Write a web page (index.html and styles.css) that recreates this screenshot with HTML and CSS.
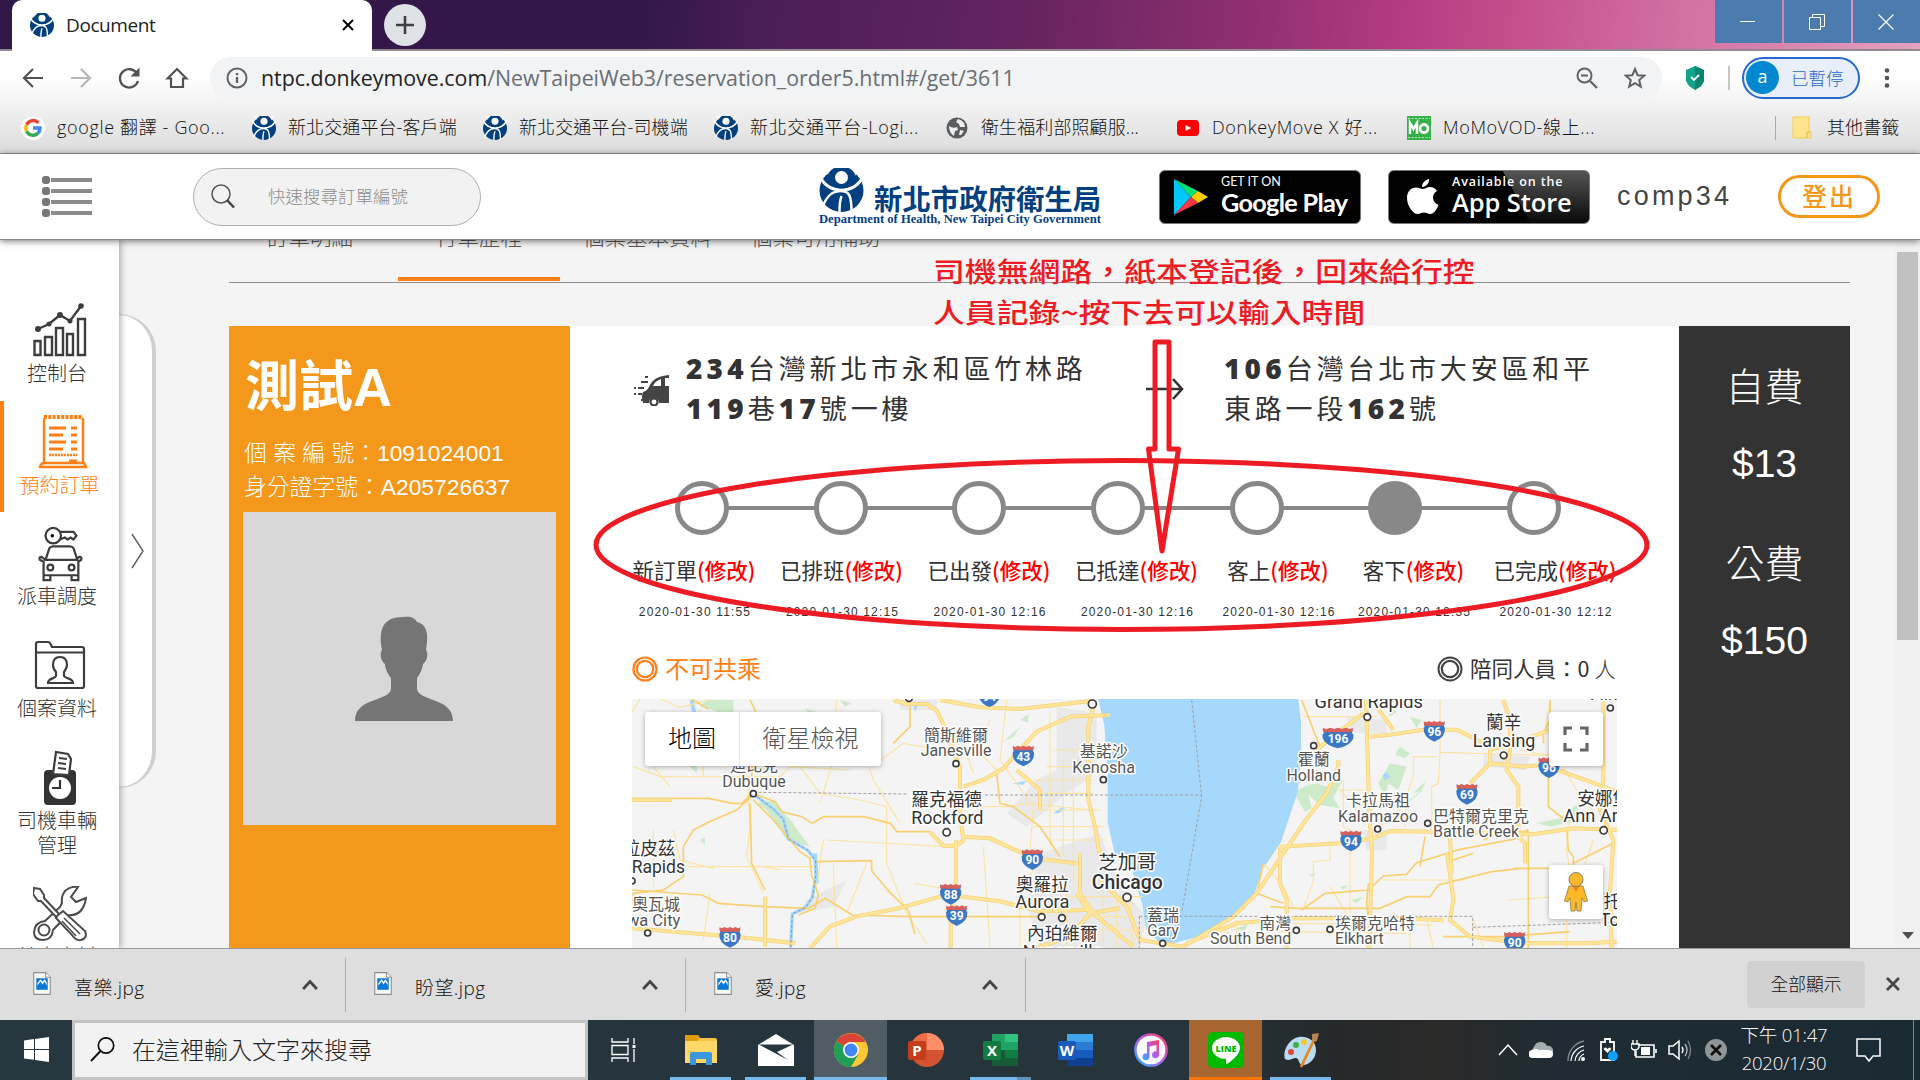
FILE: index.html
```html
<!DOCTYPE html>
<html lang="zh-Hant">
<head>
<meta charset="utf-8">
<title>Document</title>
<link rel="stylesheet" href="styles.css">
</head>
<body>
<svg class="defs" width="0" height="0">
  <symbol id="emblem" viewBox="0 0 44 44">
    <ellipse cx="22" cy="22.5" rx="22" ry="21.5" fill="#04407f"/>
    <path d="M0 8 C5 18 13 22 22 22 S39 18 44 8" fill="none" stroke="#fff" stroke-width="3"/>
    <path d="M3 0 L8 5 Q11 16 21 17 H23 Q33 16 37 5 L41 0 H0" fill="#fff"/>
    <ellipse cx="22" cy="9.5" rx="14" ry="11" fill="#04407f"/>
    <path d="M7 8 Q12 19 22 19 T37 8" fill="none" stroke="#04407f" stroke-width="2"/>
    <ellipse cx="22" cy="9.5" rx="6.5" ry="6.5" fill="#fff"/>
    <path d="M3 39 C8 26 14 23 21 23 C29 23 32 26 32 44" fill="none" stroke="#fff" stroke-width="2.500"/>
    <path d="M20 44 Q20 33 22 28" fill="none" stroke="#fff" stroke-width="2.500"/>
  </symbol>
  <symbol id="jpg" viewBox="0 0 17 22">
    <path d="M.6.6H12l4.400 4.400V21.400H.6z" fill="#fafafa" stroke="#8b8b8b"/>
    <path d="M12 .6V5h4.400" fill="#fff" stroke="#8b8b8b"/>
    <path d="M3 6h11v11H3z" fill="#0a78d6"/>
    <path d="M4 13l3-4 2 3 2-3 2 4v-3l-2-3-2 2-2-2-3 4z" fill="#fff"/>
  </symbol>
  <symbol id="up" viewBox="0 0 14 10"><path d="M1 8.500 7 2l6 6.500" fill="none" stroke="#444" stroke-width="2.400"/></symbol>
</svg>

<div class="tabstrip">
  <div class="tab">
    <svg class="fav"><use href="#emblem"/></svg>
    <span class="tab-title">Document</span>
    <svg class="tab-close" viewBox="0 0 12 12"><path d="M1 1l10 10M11 1 1 11" stroke="#000" stroke-width="2"/></svg>
  </div>
  <div class="newtab"><svg width="20" height="20" viewBox="0 0 20 20"><path d="M10 1v18M1 10h18" stroke="#3c4043" stroke-width="2.600"/></svg></div>
  <div class="winbtns">
    <div><svg width="16" height="16" viewBox="0 0 16 16"><path d="M0 7.500h15" stroke="#fff"/></svg></div>
    <div><svg width="16" height="16" viewBox="0 0 16 16"><path d="M.5 3.500h11v12H.5zM3.500 3V.5h12v12H12" fill="none" stroke="#fff"/></svg></div>
    <div><svg width="16" height="16" viewBox="0 0 16 16"><path d="M.5.5l15 15M15.500.5l-15 15" stroke="#fff" stroke-width="1.200"/></svg></div>
  </div>
</div>

<div class="chrome">
  <div class="toolbar">
    <div class="navs">
      <svg viewBox="0 0 24 24"><path d="M22 12H3M12 3l-9 9 9 9" fill="none" stroke="#505356" stroke-width="2.200"/></svg>
      <svg viewBox="0 0 24 24"><path d="M2 12h19M12 3l9 9-9 9" fill="none" stroke="#b5b7ba" stroke-width="2.200"/></svg>
      <svg viewBox="0 0 24 24"><path d="M20 7.500A9.200 9.200 0 1 0 21 15" fill="none" stroke="#505356" stroke-width="2.400"/><path d="M22.500 1.500v9h-9z" fill="#505356"/></svg>
      <svg viewBox="0 0 24 24"><path d="M2.500 12.500 12 3l9.500 9.500H18V21H6v-8.500z" fill="none" stroke="#505356" stroke-width="2.200"/></svg>
    </div>
    <div class="omnibox">
      <svg width="22" height="22" viewBox="0 0 22 22"><circle cx="11" cy="11" r="9.500" fill="none" stroke="#5f6368" stroke-width="2"/><path d="M11 10v6M11 6v2.200" stroke="#5f6368" stroke-width="2.300"/></svg>
      <span class="url"><b>ntpc.donkeymove.com</b>/NewTaipeiWeb3/reservation_order5.html#/get/3611</span>
      <svg class="mag" width="22" height="22" viewBox="0 0 22 22"><circle cx="8.500" cy="8.500" r="7" fill="none" stroke="#5f6368" stroke-width="2"/><path d="M5 8.500h7M14 14l7 7" stroke="#5f6368" stroke-width="2.200"/></svg>
      <svg width="22" height="22" viewBox="0 0 22 22"><path d="M11 2l2.600 6.200 6.700.5-5.100 4.400 1.600 6.600L11 16.200 5.200 19.700l1.600-6.600-5.100-4.400 6.700-.5z" fill="none" stroke="#5f6368" stroke-width="2"/></svg>
    </div>
    <svg class="shield" width="20" height="24" viewBox="0 0 20 24"><path d="M10 0l9 4v11l-3 5-6 4-6-4-3-5V4z" fill="#12a389"/><path d="M10 0l9 4v11l-3 5-6 4z" fill="#0c8570"/><path d="M6 11l3 3 5-5" fill="none" stroke="#fff" stroke-width="1.800"/></svg>
    <i class="vbar"></i>
    <div class="profile"><span class="avatar">a</span><span>已暫停</span></div>
    <svg class="dots" width="6" height="20" viewBox="0 0 6 20"><g fill="#505356"><circle cx="3" cy="2.500" r="2.300"/><circle cx="3" cy="10" r="2.300"/><circle cx="3" cy="17.500" r="2.300"/></g></svg>
  </div>
  <div class="bookmarks">
    <div class="bm"><svg viewBox="0 0 24 24"><circle cx="12" cy="12" r="12" fill="#fff"/><g fill="none" stroke-width="3.400"><path d="M17.500 6.800A7.200 7.200 0 0 0 5.600 8.800" stroke="#ea4335"/><path d="M5.600 8.800a7.200 7.200 0 0 0 0 6.400" stroke="#fbbc05"/><path d="M5.600 15.200A7.200 7.200 0 0 0 16.800 17.400" stroke="#34a853"/><path d="M16.800 17.400Q19 15.500 19 12H12" stroke="#4285f4"/></g></svg><span class="wide">google 翻譯 - Goo...</span></div>
    <div class="bm"><svg><use href="#emblem"/></svg><span>新北交通平台-客戶端</span></div>
    <div class="bm"><svg><use href="#emblem"/></svg><span>新北交通平台-司機端</span></div>
    <div class="bm"><svg><use href="#emblem"/></svg><span class="wide">新北交通平台-Logi...</span></div>
    <div class="bm"><svg viewBox="0 0 24 24"><circle cx="12" cy="12" r="10.500" fill="#5a5d60"/><path d="M4 10q4 3 8 1l1 3-3 1-1 5q-5-3-5-10zM13 3l-2 3 3 2 1 3h5q0-6-7-8zM15 14l4 1-3 4h-2z" fill="#eee"/></svg><span>衛生福利部照顧服...</span></div>
    <div class="bm"><svg viewBox="0 0 24 24"><rect x="1" y="4" width="22" height="16" rx="4" fill="#f00"/><path d="M9.500 9l6 3-6 3z" fill="#fff"/></svg><span class="wide">DonkeyMove X 好...</span></div>
    <div class="bm"><svg viewBox="0 0 24 24"><path d="M0 0h24v24H0z" fill="#35b14a"/><path d="M1 2.500h22M1 21.500h22" stroke="#b9eabf" stroke-dasharray="2 1.500"/><path d="M3 18V7l3.500 6L10 7v11" fill="none" stroke="#fff" stroke-width="2.500"/><circle cx="17" cy="12.500" r="4" fill="none" stroke="#fff" stroke-width="2.800"/></svg><span class="wide">MoMoVOD-線上...</span></div>
    <i class="vbar"></i>
    <div class="bm other"><svg viewBox="0 0 24 24"><path d="M3 1h16v15h2v6H3z" fill="#fde48d" stroke="#f3cd55"/><path d="M17 22v-6h4" fill="none" stroke="#e5b93c"/></svg><span>其他書籤</span></div>
  </div>
</div>

<header class="apphead">
  <svg class="menu" width="51" height="42" viewBox="0 0 51 42"><g fill="#777"><rect x="0" y="0" width="8" height="8" rx="3"/><rect x="0" y="11" width="8" height="8" rx="3"/><rect x="0" y="22" width="8" height="8" rx="3"/><rect x="0" y="33" width="8" height="8" rx="3"/></g><path d="M9 4h41M9 15h41M9 26h41M9 37h41" stroke="#8b8b8b" stroke-width="4"/></svg>
  <div class="search"><svg width="24" height="24" viewBox="0 0 24 24"><circle cx="10" cy="10" r="9" fill="none" stroke="#555" stroke-width="1.500"/><path d="M16 16l7 7.500" stroke="#444" stroke-width="2.500"/></svg><span>快速搜尋訂單編號</span></div>
  <div class="logo">
    <div class="logo-row"><svg><use href="#emblem"/></svg><b>新北市政府衛生局</b></div>
    <small>Department of Health, New Taipei City Government</small>
  </div>
  <div class="badge gp">
    <svg width="36" height="36" viewBox="0 0 36 36"><path d="M1 0v36L18 18z" fill="#00c8fb"/><path d="M1 0l24 12-7 6z" fill="#00e178"/><path d="M25 12l10 6-10 6-7-6z" fill="#ffcb05"/><path d="M1 36l24-12-7-6z" fill="#f93647"/></svg>
    <div><small>GET IT ON</small><strong>Google Play</strong></div>
  </div>
  <div class="badge as">
    <svg width="32" height="36" viewBox="0 0 32 36"><path d="M22 0c.5 4-3 8-7 8 0-4 3-7 7-8zM16 10c2 0 4-2 7-2 3 0 5.500 1.500 7 4-6 3.500-5 11.500 1.500 14-2 5-5 9-8 9-2.500 0-4-1.500-6.500-1.500S12.500 35 10.500 35C6 35 0 27 0 19 0 12 4.500 8.500 9 8.500c3 0 5 1.500 7 1.500z" fill="#fff"/></svg>
    <div><small>Available on the</small><strong>App Store</strong></div>
  </div>
  <span class="user">comp34</span>
  <div class="logout">登出</div>
</header>

<div class="main">
  <nav class="side">
    <div class="item"><svg width="54" height="56" viewBox="0 0 54 56"><g fill="none" stroke="#3d3d3d" stroke-width="2.400"><path d="M1.500 38h6v14h-6zM12 34h7v18h-7zM23 25h7v27h-7zM34 31h6v21h-6zM45 16h7v36h-7z"/><path d="M5 26l11-5 11-9 10 6L48 3"/></g><g fill="#3d3d3d"><circle cx="5" cy="26" r="3"/><circle cx="16" cy="21" r="2.500"/><circle cx="27" cy="12" r="3"/><circle cx="37" cy="18" r="2.500"/><circle cx="48" cy="3" r="2.800"/></g></svg><span>控制台</span></div>
    <div class="item on"><svg width="54" height="56" viewBox="0 0 54 56"><g fill="none" stroke="#ff7f17" stroke-width="2.400"><path d="M8 3v44M47 3v44M4 52h46q-1-4-3-4H8q-3 0-4 4z"/><path d="M8 2h39" stroke-width="4" stroke-dasharray="3 1.300"/><path d="M13 13h17M35 13h6M13 20h14M35 20h6M13 27h17M35 27h6M13 34h14M35 34h6M33 46h8" stroke-width="2.800"/><path d="M13 40h28" stroke-dasharray="2 1"/></g></svg><span>預約訂單</span></div>
    <div class="item"><svg width="54" height="56" viewBox="0 0 54 58"><g fill="none" stroke="#3d3d3d" stroke-width="2.300"><circle cx="20" cy="10" r="8"/><path d="M27 6h14l3 4-3 4-3-2-3 2-3-2-5 2"/><path d="M12 35l4-12q1-2 4-2h17q3 0 4 2l4 12zM12 35l-4-3q-3 0-2 3l4 2v14h36V37l3-2q1-3-2-3l-4 3M10 51v5h7v-5M39 51v5h7v-5"/><circle cx="17" cy="43" r="3"/><circle cx="39" cy="43" r="3"/></g><circle cx="19" cy="10" r="1.800"/></svg><span>派車調度</span></div>
    <div class="item"><svg width="54" height="56" viewBox="0 -2 54 56"><g fill="none" stroke="#3d3d3d" stroke-width="2.200"><path d="M3 46V4q0-2 2-2h10q2 0 3 3l1 2h30q2 0 2 2v37q0 2-2 2H5q-2 0-2-2zM3 12.500h48"/><path d="M27 17c5 0 7 3 7 8 0 3-2 5-3 7v4c2 3 9 2 9 7H15c0-5 7-4 8-7v-4c-2-2-3-4-3-7 0-5 2-8 7-8z"/></g></svg><span>個案資料</span></div>
    <div class="item two"><svg width="54" height="56" viewBox="0 0 54 56"><rect x="11" y="20" width="32" height="35" rx="4" fill="#333"/><path d="M20 24 23 2l12 2 3 5-2 16z" fill="#fff" stroke="#3d3d3d" stroke-width="2.200"/><path d="M26 8l8 1M25 13l8 1M25 18l8 1" stroke="#3d3d3d" stroke-width="2"/><circle cx="27" cy="38" r="11" fill="#fff"/><path d="M27 30v8h-8" fill="none" stroke="#333" stroke-width="2.200"/></svg><span>司機車輛<br>管理</span></div>
    <div class="item"><svg width="54" height="56" viewBox="0 0 54 56"><g fill="#fff" stroke="#4b4b4b" stroke-width="2"><path d="M45 1q-8-1-13 4-4 5-3 12l-2 4-15 14q-10 1-11 11 0 8 9 8 9 0 10-10l14-15q16 2 19-17l-10 4-5-5z"/><circle cx="11" cy="44" r="5.500"/><path d="M1 2l6 1 4 6v3l16 17-3 3L8 15H5L0 8z"/><path d="M24 30l6-5 22 20q3 7-4 9-5 1-9-5L23 32z"/><path d="M31 32l16 16M29 35l14 15" stroke-width="1.500"/></g></svg><span>基本資料</span></div>
  </nav>
  <div class="handle"><svg width="14" height="36" viewBox="0 0 14 36"><path d="M1 1l11 17L1 35" fill="none" stroke="#666" stroke-width="1.500"/></svg></div>

  <section class="page">
    <div class="tabs"><span>訂單明細</span><span class="cur">行車歷程</span><span>個案基本資料</span><span>個案可用補助</span></div>
    <div class="cards">
      <aside class="person">
        <h1>測試A</h1>
        <p class="sp"><span>個 案 編 號：</span>1091024001</p>
        <p><span>身分證字號：</span>A205726637</p>
        <div class="photo"><svg width="98" height="106" viewBox="0 0 98 106"><path d="M48 1c8-1 12 1 14 5 10 2 12 13 9 28 2 2 2 11-3 14-1 6-3 10-6 14v11c2 13 36 8 36 32H0C0 81 34 86 36 73V62c-3-4-6-9-6-14-5-3-5-12-3-14C23 12 29 1 48 1z" fill="#757575"/></svg></div>
      </aside>
      <div class="trip">
        <div class="route">
          <svg class="van" width="36" height="32" viewBox="0 0 36 32"><path d="M10 18q4-1 6-5Q20 2 36 1v3h-4v8h4v17H26a5 5 0 0 0-10 0h-6q-2-6 0-11zM28 5q-6 2-8 7h8z" fill="#444" fill-rule="evenodd"/><circle cx="21" cy="28" r="3.500" fill="#fff" stroke="#444" stroke-width="2.200"/><path d="M12 3h3M8 8h7M1 14h2M5 14h6M1 20h2M5 20h4M8 26h3" stroke="#444" stroke-width="2"/></svg>
          <div class="addr from"><b>234</b>台灣新北市永和區竹林路<br><b>119</b>巷<b>17</b>號一樓</div>
          <svg class="to" width="38" height="22" viewBox="0 0 38 22"><path d="M0 11h36M27 1l9 10-9 10" fill="none" stroke="#333" stroke-width="2.600"/></svg>
          <div class="addr"><b>106</b>台灣台北市大安區和平<br>東路一段<b>162</b>號</div>
        </div>
        <div class="steps"><i></i><i></i><i></i><i></i><i></i><i class="full"></i><i></i></div>
        <div class="stages">
          <div>新訂單<em>(修改)</em><small>2020-01-30 11:55</small></div>
          <div>已排班<em>(修改)</em><small>2020-01-30 12:15</small></div>
          <div>已出發<em>(修改)</em><small>2020-01-30 12:16</small></div>
          <div>已抵達<em>(修改)</em><small>2020-01-30 12:16</small></div>
          <div class="nar">客上<em>(修改)</em><small>2020-01-30 12:16</small></div>
          <div class="nar">客下<em>(修改)</em><small>2020-01-30 12:35</small></div>
          <div>已完成<em>(修改)</em><small>2020-01-30 12:12</small></div>
        </div>
        <div class="share">
          <svg width="26" height="26" viewBox="0 0 26 26"><g fill="none" stroke="#ff7f17"><circle cx="13" cy="13" r="11.500" stroke-width="2.200"/><circle cx="13" cy="13" r="8.200" stroke-width="2.200"/></g></svg>
          <b>不可共乘</b>
          <svg width="26" height="26" viewBox="0 0 26 26"><g fill="none" stroke="#444"><circle cx="13" cy="13" r="11.500" stroke-width="2"/><circle cx="13" cy="13" r="8.200" stroke-width="2.200"/></g></svg>
          <span>陪同人員：0 <u>人</u></span>
        </div>
        <div class="map">
          <svg width="985" height="249" viewBox="36 177 2955 747">
            <defs>
              <g id="shield"><path d="M-32-22Q-26-14-32-8-34 20 0 33 34 20 32-8 26-14 32-22Z" fill="#3a78c6"/><path d="M-32-28l8 3 8-4 8 4 8-4 8 4 8-4 8 4 8-3-4 13h-58z" fill="#d7605c"/></g>
              <g id="major">
                <path d="M820 180l40 12h60l30 20 30 60 20 60 20 50v120l5 60 5 40-20 15h-40l-40-40M1030 590l80 5 130 60 130 15M1008 600v120l-16 100v104M1030 440l60-20 60-35 40-45 60-65 100-45 120-5M960 180l120 22 120 5 220-25M1420 200l-15 60v220l20 80 15 90M36 865l180 15 130 10 180 20M570 924l60-65 80-30 130-25 140-40 160 20 120 30 160-5M1190 390l70 60v60M36 480h120M435 770v150M1380 640v120l40 60 120 100"/>
                <path d="M1370 760l40 60-60 70-100 34M1410 820l90-15M1440 720l80 80 40 100 130 20 150-90 70-70 80-120 60-90 70-90 35-80V360M1980 620l180-10 100-15 50-22 130 2 300 8 120-18 150 5 40 25M2238 180l10 340 8 120-8 284M2250 290l60-6 100-15h100l80 40M2270 200l50 70M2090 330l60-50 80-60M2550 430l60-60V330M2610 370l100 10 60-5 140 50 80 30M2650 180l20 60v90l-10 60 35 50v150l20 20v60M2480 640l10 60 10 80-10 60 60 50 80 10 90 10 180 0 90-5M2490 580l5 120M1980 620v110l20 50v144M2790 270l-80 30-100 30M2950 180v240l-10 90 40 90-10 160 5 164M1700 910l150-60 160-15 340 0 120 6"/>
              </g>
            </defs>
            <rect x="36" y="177" width="2955" height="747" fill="#f4f4f4"/>
            <g fill="#e9e9e9"><path d="M1310 200l120 20v180l-90 60-120 100-60-40 90-100 60-30zM1260 640l180-60 60 160 80 90-20 94h-300l-40-130zM560 780l120-60-40 80-100 20zM840 180h110v30H840zM2180 230l120 10v40h-110zM2590 340l140 10-10 40-130-10zM2230 570h70v60h-60z"/></g>
            <g fill="#cdebcb"><path d="M260 180h80v60l-60-30-40-10zM210 380l20-10v30zM555 205l45 15-30 10zM660 180l35 10-20 10zM1150 305l50-45-20 30zM1200 240l25-18v25zM410 490l50-10 50 60 60 80-70-20-60-90zM240 600l15-10v25zM2090 430l30 10 50-25-30 60 20 30-60-10-35-30 10 40-20 10-35-60 45-20zM2310 370l50 10-25 70-30-20-10 40-20-40zM2340 320l30 20-15 15-30-10zM2350 500l60-50-30 10 40-40-15 30-50 40zM2370 230l35 10-15 25zM2300 195l30 20-20 15zM2290 170l40 10-15 15zM2750 550l70-15 60-50-20 60-70 15zM2195 780l35-10-20 20zM2160 740l25-5-15 15zM1840 870l45-20-10 20zM2065 705l22-5-10 10zM490 560l30-20-20 50z"/></g>
            <g fill="#a6d8fc"><path d="M1435 177H2035l8 70 0 100-10 110-50 150-55 80-30 90-60 50-90 60-120 30-20-20-30-30-10-70-30-100-55-60-20-90v-140l-10-150z"/><path d="M1175 432l45-10-10 12zM1300 520l30-22 5 10-20 12zM880 190l15 5-10 20zM2288 405l12-8 10 14-15 10z"/></g>
            <path d="M400 462l60 45 30 30 15 60 60 35 22 30v50l-10 60-20 30-40 20-5 100" fill="none" stroke="#a6d8fc" stroke-width="10"/>
            <path d="M215 180l8 40M585 640l6 90" stroke="#a6d8fc" stroke-width="12"/>
            <g fill="none" stroke="#fbe3a3" stroke-width="3.500">
              <path d="M60 177l-24 40M120 177l60 25 90-22M100 210v170l50 60M240 210l10 200M380 380l10 180-10 90 50 110M540 380l60 80 120 20 80 20v80M650 180l-10 180-40 130M700 240l60 180 80 130M770 370l80-60 110 20M610 600l-20 140M640 670l10 254M800 550v120l60 150 60 90M36 680h550M620 600l360 20M160 570l20 90 100 25M100 570v170M270 760l-20 140M480 690l-50-10M1040 500h120l60-10 200 20M1060 400l-40-120M1110 240l-40 90 60 60M1160 180l-20 180 100 140-10 130M1290 220v400M1330 360v290M1360 330v400M1240 420h180M1260 460h160M1260 510h180M1240 560h210M1290 600h170M1300 330h120M1280 380h130M1250 680l-50 60v180M1340 740v184M1390 830h130M1350 770h220M1370 870h200M1450 740v170M1490 760v160M1090 620l20 300M880 730l120 20M740 670l-60 150M40 380l80 30 130 0M240 410h240l30-30 180 10"/>
              <path d="M2050 230h220M2460 177v160l500 14M2460 340l-5 90-20 10v150M2380 350h70M2380 350v60l-25 70v80M2090 390l80 70 60 70M2160 450h80M2170 420v140l20 10v250M2130 610v50l-50 5v60l-30 80M1930 670l60 70 30 60M2700 330l110 20 60 100 60 80M2350 480l-30 60-50 20M2790 180l-15 100M2850 530l-10 100 20 140M1990 850l450 5M1980 875l380 5M2240 924l20-90M2370 840v84M2420 840l20 84M2560 840l30 80M2840 820v104M2130 740l110 180M2290 720h250M2660 780l300-20M1800 860l80 60M1850 840v84M1530 780l10 140M2920 600l-70 200"/>
            </g>
            <g fill="none" stroke="#f8d070" stroke-width="5">
              <path d="M36 475h230l70 15h30l30-30 70 25 20 30 60 15 30 20 35-20h120l80 20 20 25h100M400 465l-50 45-70 30-60 30-30 50v90l-60 40-90 10v30M400 480l60 60 80 95 30 20 5 50 20 60-10 40-50 20M36 750l210 15 50 25 140 10 130 5 50-30 80 50 180 5h400M590 665l165-3 0 30 50 60 60 60 20 70M390 180l15 30-10 200M215 177l50 30M870 200v60l-50 50M390 490l5 180 40 80M1130 400l10 90 40 10 80 60 60 90"/>
              <path d="M2045 180l35 90 20 50M1950 800l80 5h250l80-35h70l25-35 160-40 90-10M2045 810l70-50 130-10 45-42 70-5 30-35 130-40 160-30 45-30M2415 590l-15 90M2245 730l-5 60 5 40M2500 660l60-20M2625 575l100 0v349M2590 600l40-20M2840 570l5 60 15 20v40M2860 670l120-60M2680 685h140l90 80h80M2785 410v90l50 40M2790 180v60l-20 40v30M2470 890h180l200-15M1930 670l-20 90 80 30"/>
            </g>
            <use href="#major" fill="none" stroke="#f7d173" stroke-width="12"/>
            <use href="#major" fill="none" stroke="#ffe59a" stroke-width="8"/>
            <g fill="none" stroke="#a0a0a0" stroke-width="3" stroke-dasharray="9 6"><path d="M415 457l450 5M1095 465h650M1715 180l30 290-60 350M1558 829h1000v95M2558 862l430-15M1558 829v95"/></g>
            <path d="M400 462l60 45 30 30 15 60 60 35 22 30v50l-10 60-20 30-40 20-5 100" fill="none" stroke="#7f9aae" stroke-width="3" stroke-dasharray="9 6"/>
            <g fill="#fff" stroke="#3a3a3a" stroke-width="5"><circle cx="400" cy="461" r="9"/><circle cx="1008" cy="371" r="9"/><circle cx="980" cy="577" r="11"/><circle cx="83" cy="879" r="9"/><circle cx="1265" cy="831" r="10"/><circle cx="1326" cy="834" r="10"/><circle cx="1417" cy="192" r="12"/><circle cx="867" cy="174" r="10"/><circle cx="1450" cy="419" r="9"/><circle cx="36" cy="723" r="9"/><circle cx="1521" cy="772" r="12"/><circle cx="1628" cy="910" r="9"/><circle cx="2242" cy="231" r="10"/><circle cx="2081" cy="317" r="9"/><circle cx="2651" cy="346" r="10"/><circle cx="2273" cy="567" r="9"/><circle cx="2423" cy="550" r="9"/><circle cx="2951" cy="571" r="11"/><circle cx="2971" cy="204" r="9"/><circle cx="2029" cy="871" r="9"/><circle cx="2130" cy="868" r="9"/></g>
            <g class="sh">
              <g transform="translate(1108 168)"><use href="#shield"/><text y="16">94</text></g>
              <g transform="translate(1210 346)"><use href="#shield"/><text y="16">43</text></g>
              <g transform="translate(1237 657)"><use href="#shield"/><text y="16">90</text></g>
              <g transform="translate(992 761)"><use href="#shield"/><text y="16">88</text></g>
              <g transform="translate(1010 825)"><use href="#shield"/><text y="16">39</text></g>
              <g transform="translate(330 890)"><use href="#shield"/><text y="16">80</text></g>
              <g transform="translate(2154 292)"><use href="#shield" transform="scale(1.450 1)"/><text y="16">196</text></g>
              <g transform="translate(2443 272)"><use href="#shield"/><text y="16">96</text></g>
              <g transform="translate(2787 381)"><use href="#shield"/><text y="16">96</text></g>
              <g transform="translate(2541 461)"><use href="#shield"/><text y="16">69</text></g>
              <g transform="translate(2193 601)"><use href="#shield"/><text y="16">94</text></g>
              <g transform="translate(2684 905)"><use href="#shield"/><text y="16">90</text></g>
            </g>
            <g class="city">
              <text x="402" y="392">迪比克</text><text x="402" y="440" textLength="190" lengthAdjust="spacingAndGlyphs">Dubuque</text>
              <text x="1008" y="302">簡斯維爾</text><text x="1008" y="348" textLength="212" lengthAdjust="spacingAndGlyphs">Janesville</text>
              <text x="1451" y="350">基諾沙</text><text x="1451" y="398" textLength="188" lengthAdjust="spacingAndGlyphs">Kenosha</text>
              <text x="108" y="810">奧瓦城</text><text x="80" y="858" textLength="202" lengthAdjust="spacingAndGlyphs">Iowa City</text>
              <text x="1629" y="842">蓋瑞</text><text x="1629" y="889" textLength="94" lengthAdjust="spacingAndGlyphs">Gary</text>
              <text x="2081" y="375">霍蘭</text><text x="2081" y="422" textLength="163" lengthAdjust="spacingAndGlyphs">Holland</text>
              <text x="2274" y="498">卡拉馬祖</text><text x="2274" y="545" textLength="240" lengthAdjust="spacingAndGlyphs">Kalamazoo</text>
              <text x="2583" y="545">巴特爾克里克</text><text x="2568" y="592" textLength="258" lengthAdjust="spacingAndGlyphs">Battle Creek</text>
              <text x="1966" y="866">南灣</text><text x="1892" y="911" textLength="244" lengthAdjust="spacingAndGlyphs">South Bend</text>
              <text x="2265" y="866">埃爾克哈特</text><text x="2218" y="911" textLength="146" lengthAdjust="spacingAndGlyphs">Elkhart</text>
            </g>
            <g class="city big">
              <text x="980" y="497">羅克福德</text><text x="982" y="551" textLength="217" lengthAdjust="spacingAndGlyphs">Rockford</text>
              <text x="87" y="644">拉皮茲</text><text x="115" y="699" textLength="160" lengthAdjust="spacingAndGlyphs">Rapids</text>
              <text x="1267" y="752">奧羅拉</text><text x="1267" y="805" textLength="162" lengthAdjust="spacingAndGlyphs">Aurora</text>
              <text x="1327" y="900">內珀維爾</text><text x="1327" y="955" textLength="238" lengthAdjust="spacingAndGlyphs">Naperville</text>
              <text x="1522" y="686" class="xl">芝加哥</text><text x="1522" y="746" class="xb" textLength="213" lengthAdjust="spacingAndGlyphs">Chicago</text>
              <text x="2246" y="205" textLength="325" lengthAdjust="spacingAndGlyphs">Grand Rapids</text>
              <text x="2651" y="266">蘭辛</text><text x="2652" y="321" textLength="188" lengthAdjust="spacingAndGlyphs">Lansing</text>
              <text x="2951" y="495">安娜堡</text><text x="2952" y="546" textLength="244" lengthAdjust="spacingAndGlyphs">Ann Arbor</text>
              <text x="3030" y="805">托萊多</text><text x="3020" y="858">Toledo</text>
              <text x="2960" y="180">Flint</text>
            </g>
          </svg>
          <div class="maptype"><span>地圖</span><span>衛星檢視</span></div>
          <div class="mapbtn full-btn"><svg width="26" height="26" viewBox="0 0 26 26"><path d="M2 9V2h7M17 2h7v7M24 17v7h-7M9 24H2v-7" fill="none" stroke="#666" stroke-width="3.200"/></svg></div>
          <div class="mapbtn peg"><svg width="24" height="40" viewBox="0 0 24 40"><path d="M5 14h14l4.500 15-3.500 1-2-4-1 13h-4l-1-9-1 9H7L6 26l-2 4-3.500-1z" fill="#fbb829" stroke="#8c7a4a" stroke-width=".8"/><path d="M8 14h8l-4 6z" fill="#e8871e"/><circle cx="12" cy="7.500" r="7" fill="#fbb829" stroke="#666" stroke-width=".8"/></svg></div>
        </div>
      </div>
      <aside class="fees"><span>自費</span><span>$13</span><span class="gap">公費</span><span>$150</span></aside>
    </div>
  </section>
  <div class="scroll"><i></i><svg width="12" height="7" viewBox="0 0 12 7"><path d="M0 0h12L6 7z" fill="#505050"/></svg></div>
</div>

<div class="downloads">
  <div class="dl"><svg width="18" height="23"><use href="#jpg"/></svg><span>喜樂.jpg</span><svg width="16" height="12"><use href="#up"/></svg></div>
  <div class="dl"><svg width="18" height="23"><use href="#jpg"/></svg><span>盼望.jpg</span><svg width="16" height="12"><use href="#up"/></svg></div>
  <div class="dl"><svg width="18" height="23"><use href="#jpg"/></svg><span>愛.jpg</span><svg width="16" height="12"><use href="#up"/></svg></div>
  <div class="showall">全部顯示</div>
  <svg class="dlx" width="14" height="14" viewBox="0 0 14 14"><path d="M1 1l12 12M13 1 1 13" stroke="#444" stroke-width="2.800"/></svg>
</div>

<div class="taskbar">
  <div class="start"><svg width="25" height="25" viewBox="0 0 25 25"><path d="M0 3.500l10-1.400V12H0zM11 2l14-2v12H11zM0 13h10v9.800L0 21.400zM11 13h14v12l-14-2z" fill="#fff"/></svg></div>
  <div class="find"><svg width="25" height="25" viewBox="0 0 25 25"><circle cx="16" cy="8.500" r="7.700" fill="none" stroke="#111" stroke-width="1.700"/><path d="M10.500 14 1 24" stroke="#111" stroke-width="1.900"/></svg><span>在這裡輸入文字來搜尋</span></div>
  <div class="tv"><svg width="26" height="24" viewBox="0 0 26 24"><g fill="none" stroke="#fff" stroke-width="1.300"><path d="M1 0v4h16V0M1 7.500h16v9H1zM1 24v-4h16v4M23 0v6M23 11v13"/></g><path d="M21.500 7h3v3h-3z" fill="#fff"/></svg></div>
  <div class="app run"><svg viewBox="0 0 36 36"><path d="M2 5q0-2 2-2h11l2 3h15q2 0 2 2v22H2z" fill="#f7c644"/><path d="M2 3h13l2 3-3 3H2z" fill="#df9c08"/><path d="M2 9h32v22H2z" fill="#fdd869"/><path d="M7 33V22q0-2 2-2h18q2 0 2 2v11h-6v-6H13v6z" fill="#3a96dd"/></svg></div>
  <div class="app run"><svg viewBox="0 0 36 36"><path d="M0 13 18 2l18 11v21H0z" fill="#fff"/><path d="M1 12.500h34L19 20l11 8-17-9z" fill="#26363f"/></svg></div>
  <div class="app run hot"><svg viewBox="0 0 36 36"><circle cx="18" cy="18" r="17" fill="#fcc934"/><path d="M18 18 3.300 9.500A17 17 0 0 1 32.700 10H18z" fill="#da4437"/><path d="M18 18 3.300 9.500A17 17 0 0 0 18 35l7.500-13z" fill="#1e9e57"/><circle cx="18" cy="18" r="8" fill="#fff"/><circle cx="18" cy="18" r="6.400" fill="#4285f4"/></svg></div>
  <div class="app"><svg viewBox="0 0 36 36"><circle cx="19" cy="18" r="17" fill="#d35230"/><path d="M19 1a17 17 0 0 1 17 17H19z" fill="#ff8f6b"/><path d="M19 1v17H2A17 17 0 0 1 19 1z" fill="#ed6c47"/><rect y="9" width="18" height="19" rx="2" fill="#c43e1c"/><text x="9" y="24" class="ofc">P</text></svg></div>
  <div class="app run xl-app"><svg viewBox="0 0 36 36"><path d="M9 2h26v32H9z" fill="#21a366"/><path d="M22 2h13v8H22z" fill="#33c481"/><path d="M9 18h26v16H9z" fill="#185c37"/><path d="M22 18h13v8H22z" fill="#107c41"/><rect y="9" width="18" height="19" rx="2" fill="#107c41"/><text x="9" y="24" class="ofc">X</text></svg></div>
  <div class="app"><svg viewBox="0 0 36 36"><path d="M9 2h26v8H9z" fill="#41a5ee"/><path d="M9 10h26v8H9z" fill="#2b7cd3"/><path d="M9 18h26v8H9z" fill="#185abd"/><path d="M9 26h26v8H9z" fill="#103f91"/><rect y="9" width="18" height="19" rx="2" fill="#185abd"/><text x="9" y="24" class="ofc">W</text></svg></div>
  <div class="app"><svg viewBox="0 0 36 36"><defs><linearGradient id="it" x1="1" y1="0" x2="0" y2="1"><stop offset="0" stop-color="#fb3c5f"/><stop offset=".5" stop-color="#b35df0"/><stop offset="1" stop-color="#26b6f5"/></linearGradient></defs><circle cx="18" cy="18" r="15.600" fill="#fafafa" stroke="url(#it)" stroke-width="2.500"/><path d="M14 10l12-2v15a3.500 3.500 0 1 1-2.500-3.500V13L16.500 14.500V25a3.500 3.500 0 1 1-2.500-3.500z" fill="url(#it)"/></svg></div>
  <div class="app run line"><svg viewBox="0 0 36 36"><rect width="36" height="36" rx="5" fill="#00b900"/><path d="M18 5c8 0 14 5 14 11 0 7-9 13-13 16-1 0-1-1-1-5-8 0-14-5-14-11S10 5 18 5z" fill="#fff"/><text x="18" y="20" class="lt">LINE</text></svg></div>
  <div class="app run"><svg viewBox="0 0 36 36"><path d="M16 5c9-1 17 4 17 13 0 8-6 15-13 15-5 0-3-6-7-7-4 0-7 4-11 1C-1 20 6 6 16 5z" fill="#b9dcf0"/><circle cx="8" cy="20" r="3" fill="#e2453c"/><circle cx="13" cy="13" r="3" fill="#3eae49"/><circle cx="21" cy="10" r="3" fill="#f4c531"/><path d="M31 8 18 35" stroke="#e88724" stroke-width="2.800"/><path d="M29 10l0-8 7-1-2 8z" fill="#b98352"/></svg></div>
  <div class="tray">
    <svg width="20" height="24" viewBox="0 0 20 24"><path d="M1 17l9-10 9 10" fill="none" stroke="#fff" stroke-width="1.500"/></svg>
    <svg width="25" height="24" viewBox="0 0 25 24"><path d="M5 17a5 5 0 0 1 0-8 7 7 0 0 1 13-1 5 5 0 0 1 5 8z" fill="#a5adb1"/><path d="M3 20a4 4 0 0 1 1-8q3-2 6 0l9 0q5 0 5 4t-4 4z" fill="#fff"/></svg>
    <svg width="22" height="24" viewBox="0 0 22 24"><g fill="none"><path d="M2 23A20 20 0 0 1 18 3" stroke="#7c868b" stroke-width="1.500"/><path d="M5 23A16 16 0 0 1 18 8M9 23a12 12 0 0 1 9-11M13 23a8 8 0 0 1 5-7" stroke="#fff" stroke-width="1.200"/></g><circle cx="17" cy="21" r="2" fill="#fff"/></svg>
    <svg width="20" height="24" viewBox="0 0 20 24"><path d="M2 4h4V1h5v3h4v18H2z" fill="none" stroke="#fff" stroke-width="1.800"/><path d="M8.500 15 4.500 11q2-3 4 0 2-3 4 0z" fill="#fff"/><circle cx="14" cy="18" r="5" fill="#0aa3f5"/></svg>
    <svg width="26" height="24" viewBox="0 0 26 24"><path d="M7 7h16v12H5v-6M25 11v4" fill="none" stroke="#fff" stroke-width="1.600"/><path d="M10 9h9v8h-9z" fill="#fff"/><path d="M2 2v4M6 2v4M0 6h8v3q-1 3-4 3t-4-3zM4 12v6" fill="none" stroke="#fff" stroke-width="1.400"/></svg>
    <svg width="24" height="24" viewBox="0 0 24 24"><path d="M1 8h4l6-5v18l-6-5H1z" fill="none" stroke="#fff" stroke-width="1.500"/><g fill="none" stroke-width="1.400"><path d="M14 9q2 3 0 6" stroke="#fff"/><path d="M17 6q4 6 0 12" stroke="#aeb5b8"/><path d="M20 3q5 9 0 18" stroke="#75808a"/></g></svg>
    <svg width="24" height="24" viewBox="0 0 24 24"><circle cx="12" cy="12" r="11" fill="#8f9599"/><path d="M7 7l10 10M17 7 7 17" stroke="#111" stroke-width="2.600"/></svg>
    <div class="clock">下午 01:47<br>2020/1/30</div>
    <svg class="note" width="26" height="26" viewBox="0 0 26 26"><path d="M1 2h23v17h-7l-4 5-4-5H1z" fill="none" stroke="#fff" stroke-width="1.500"/></svg>
    <i></i>
  </div>
</div>

<div class="memo">司機無網路，紙本登記後，回來給行控<br>人員記錄~按下去可以輸入時間</div>
<svg class="ink" width="1070" height="300" viewBox="590 335 1070 300">
  <g fill="none" stroke="#ed1c24" stroke-width="5"><ellipse cx="1121.500" cy="545" rx="525.500" ry="84.500"/><path stroke-linejoin="round" d="M1155 342h14v107h9.500L1162 551l-13.500-102h6.500z"/></g>
</svg>
</body>
</html>
```
FILE: styles.css
```css
* { box-sizing: border-box; }
body { margin: 0; width: 1920px; height: 1080px; overflow: hidden; position: relative; background: #f4f4f4; font-family: "Liberation Sans", "Noto Sans CJK TC", sans-serif; font-weight: 300; color: #333; white-space: nowrap; }
svg { display: block; flex: none; }
.defs { position: absolute; }

.tabstrip { height: 51px; display: flex; padding-left: 12px; border-bottom: 2px solid #94898f; background: linear-gradient(98deg, #311748 0, #331748 640px, #4d1f58 780px, #66245f 1020px, #8f2f70 1240px, #b63c82 1400px, #c85692 1540px, #d477a6 1700px, #e5a3bf 1920px); }
.tab { width: 360px; height: 51px; background: #fff; border-radius: 10px 10px 0 0; display: flex; align-items: center; padding: 0 18px 2px 18px; font: 19px "Open Sans", sans-serif; color: #222; }
.fav { width: 24px; height: 24px; }
.tab-title { margin-left: 12px; flex: 1; letter-spacing: -.4px; padding-top: 1px; }
.tab-close { width: 12px; height: 12px; }
.newtab { width: 42px; height: 42px; margin: 4px 0 0 12px; border-radius: 50%; background: #dee1e6; display: flex; align-items: center; justify-content: center; }
.winbtns { margin-left: auto; display: flex; gap: 2px; }
.winbtns div { width: 67px; height: 43px; background: #4c7bb0; display: flex; align-items: center; justify-content: center; padding-right: 2px; }

.chrome { height: 103px; border-bottom: 1px solid #999; background: linear-gradient(#fff 0, #fefefe 28px, #dcdcdc 102px); font-family: "Open Sans", "Noto Sans CJK TC", sans-serif; }
.toolbar { height: 48px; padding-top: 6px; display: flex; align-items: center; }
.navs { display: flex; gap: 24px; padding-left: 21px; width: 210px; }
.navs svg { width: 24px; height: 24px; }
.omnibox { width: 1452px; height: 42px; border-radius: 21px; background: #f1f3f4; display: flex; align-items: center; padding-left: 16px; }
.url { margin: -1px 0 0 13px; flex: 1; font-size: 21.350px; font-weight: 400; color: #6a6e73; }
.url b { font-weight: 400; color: #222; }
.omnibox .mag { margin-right: 26px; }
.omnibox svg:last-child { margin-right: 16px; }
.shield { margin-left: 23px; }
.vbar { width: 2px; height: 24px; background: #c6c6c6; margin-left: 23px; }
.profile { margin-left: 12px; width: 118px; height: 42px; border: 2px solid #2668d0; border-radius: 21px; background: #e9eff9; display: flex; align-items: center; padding: 0 0 1px 2px; gap: 12px; color: #2a66cc; font-size: 17.500px; }
.avatar { width: 33px; height: 33px; border-radius: 50%; background: #0288d1; color: #fff; font-size: 18px; font-weight: 400; line-height: 31px; text-align: center; }
.dots { margin-left: 24px; }
.bookmarks { height: 54px; padding: 3px 0 0 21px; display: flex; align-items: center; color: #111; font-size: 18px; line-height: 24px; }
.bm { width: 231px; display: flex; gap: 12px; align-items: center; }
.bm span { margin-top: -2px; letter-spacing: .1px; }
.bm .wide { letter-spacing: .65px; }
.bm svg { width: 24px; height: 24px; }
.bookmarks .vbar { margin-left: 137px; width: 1px; background: #aaa; }
.other { width: auto; margin-left: 14px; gap: 13px; }

.apphead { position: relative; z-index: 2; height: 86px; background: #fff; border-bottom: 1px solid #888; box-shadow: 0 1px 7px rgba(0,0,0,.55); display: flex; align-items: center; padding-left: 42px; }
.search { margin-left: 100px; width: 288px; height: 58px; border: 1px solid #b0b0b0; border-radius: 29px; background: #f2f2f2; display: flex; align-items: center; padding: 0 0 2px 17px; gap: 33px; color: #8c8c8c; font-size: 17.500px; }
.logo { margin-left: 338px; width: 283px; color: #04407f; }
.logo-row { display: flex; gap: 10px; height: 44px; align-items: flex-end; }
.logo-row svg { width: 45px; height: 44px; }
.logo-row b { font: 700 28.400px/28px "Noto Sans CJK TC", sans-serif; height: 28px; }
.logo small { display: block; font: 700 12.620px/13px "Liberation Serif", serif; margin-top: 1px; }
.badge { width: 202px; height: 54px; border-radius: 6px; border: 1px solid #777; background: #000; color: #fff; display: flex; align-items: center; }
.badge div { margin-top: -2px; }
.badge small, .badge strong { display: block; font-weight: 400; }
.gp { margin-left: 57px; padding-left: 13px; gap: 12px; font-family: Lato, sans-serif; }
.gp small { font-size: 12.500px; line-height: 14px; }
.gp strong { font-size: 25.300px; line-height: 27px; font-weight: 700; letter-spacing: -.7px; }
.as { margin-left: 27px; padding-left: 18px; gap: 13px; background: linear-gradient(62deg, #000 0 62%, transparent 62.300%), linear-gradient(#555, #080808); font-family: "Open Sans", sans-serif; }
.as small { font-size: 12.500px; line-height: 14px; letter-spacing: .9px; font-weight: 600; }
.as strong { font-size: 25.500px; line-height: 27px; font-weight: 600; letter-spacing: -.1px; }
.user { margin-left: 27px; width: 113px; font-size: 27px; letter-spacing: 3.200px; font-weight: 400; color: #444; }
.logout { margin-left: 48px; width: 102px; height: 43px; border: 3px solid #f4981b; border-radius: 22px; color: #f4981b; font: 500 25px/34px "Noto Sans CJK TC", sans-serif; letter-spacing: 2px; text-align: center; padding-left: 0; }

.main { height: 708px; display: flex; overflow: hidden; }
.side { width: 119px; background: #fff; box-shadow: 2px 0 6px rgba(0,0,0,.3); padding-top: 49px; z-index: 1; }
.item { height: 111.700px; padding-top: 14px; border-left: 4px solid transparent; padding-right: 9px; display: flex; flex-direction: column; align-items: center; font-size: 20px; line-height: 25px; text-align: center; }
.item svg { margin-left: 6px; }
.item span { margin-top: 3px; }
.item.two { height: 136px; }
.item.on { border-color: #ff7f17; color: #ff7f17; padding-right: 4px; }
.handle { width: 37px; height: 474px; margin-top: 74px; border-right: 4px solid #cfcfcf; border-top: 1px solid #cfcfcf; border-bottom: 1px solid #cfcfcf; border-radius: 0 38px 38px 0; background: #fff; padding: 218px 0 0 12px; }
.page { width: 1621px; margin-left: 73px; }
.tabs { height: 43px; border-bottom: 1px solid #909090; display: flex; font-size: 21.500px; line-height: 30px; color: #555; }
.tabs span { padding: 0 38px; margin-top: -17px; height: 58px; }
.tabs span:nth-child(n+3) { padding: 0 0 0 23px; margin-right: 16px; }
.tabs span.cur { width: 162px; border-bottom: 4px solid #ff7f17; margin-left: 7px; }
.cards { margin-top: 43px; height: 622px; display: flex; }
.person { width: 341px; background: #f4981b; color: #fff; padding: 30px 14px; }
.person h1 { margin: 0 0 18px 2px; font: 700 54px/62px "Liberation Sans", "Noto Sans CJK TC", sans-serif; }
.person p { margin: 0 1px; font-size: 22.800px; line-height: 34px; font-weight: 400; }
.person p span { font-weight: 300; }
.person .sp { font-size: 22.800px; }
.photo { width: 313px; height: 313px; margin-top: 8px; background: #d8d8d8; padding: 104px 0 0 112px; }
.trip { width: 1109px; background: #fff; padding: 22px 62px 0; }
.route { display: flex; height: 133px; }
.van { margin: 26px 0 0 1px; }
.addr { font: 400 27px/40px "Noto Sans CJK TC", sans-serif; letter-spacing: 3.800px; color: #333; }
.addr b { font: 800 28px/40px "Open Sans", sans-serif; letter-spacing: 4.200px; }
.from { margin-left: 17px; width: 460px; }
.to { margin: 30px 40px 0 0; }
.steps { display: flex; justify-content: space-between; padding: 0 56px 0 43px; height: 54px; background: linear-gradient(#888, #888) 70px 25px / 832px 4px no-repeat; }
.steps i { width: 54px; height: 54px; border: 5px solid #888; border-radius: 50%; background: #fff; }
.steps .full { background: #888; }
.stages { display: flex; justify-content: space-between; margin-top: 22px; }
.stages div { width: 124px; display: flex; flex-wrap: wrap; justify-content: center; font: 400 21.500px/26px "Noto Sans CJK TC", sans-serif; color: #333; }
.stages .nar { width: 112px; }
.stages em { font-style: normal; color: #f00; font-weight: 500; }
.stages small { margin: 22px -2px 0 0; font: 400 12px/15px "Liberation Sans", sans-serif; letter-spacing: 1.150px; }
.share { display: flex; align-items: center; margin-top: 32px; height: 34px; font-family: "Noto Sans CJK TC", sans-serif; }
.share b { font-weight: 400; font-size: 24px; line-height: 30px; color: #ff7f17; margin: -2px auto 0 7px; }
.share span { margin: -2px 0 0 7px; width: 147px; font-size: 21.500px; line-height: 30px; font-weight: 400; }
.share u { text-decoration: none; font-weight: 300; }
.map { position: relative; margin-top: 13px; width: 985px; height: 249px; overflow: hidden; }
.city { font: 400 48px Roboto, "Noto Sans CJK TC", sans-serif; fill: #555; text-anchor: middle; stroke: #fff; stroke-width: 9px; paint-order: stroke; stroke-linejoin: round; }
.big { font-size: 53px; fill: #333; }
.xl { font-size: 58px; }
.xb { font-size: 58px; font-weight: 500; }
.sh text { font: 700 36px Roboto, sans-serif; fill: #fff; text-anchor: middle; }
.maptype { position: absolute; left: 13px; top: 13px; display: flex; background: #fff; border-radius: 3px; box-shadow: 0 1px 5px rgba(0,0,0,.3); font-size: 24px; line-height: 54px; }
.maptype span { width: 94px; text-align: center; color: #000; }
.maptype span + span { width: 142px; color: #555; border-left: 1px solid #e6e6e6; }
.mapbtn { position: absolute; left: 917px; width: 54px; height: 54px; background: #fff; border-radius: 3px; box-shadow: 0 1px 5px rgba(0,0,0,.3); display: flex; align-items: center; justify-content: center; }
.full-btn { top: 13px; }
.peg { top: 166px; }
.fees { width: 171px; background: #333; color: #fff; display: flex; flex-direction: column; align-items: center; font-size: 39px; line-height: 76px; padding-top: 24px; font-weight: 300; }
.fees .gap { margin-top: 25px; }
.scroll { width: 25px; margin-left: 45px; background: #f1f1f1; padding: 12px 2px 0; display: flex; flex-direction: column; align-items: center; }
.scroll i { width: 21px; height: 388px; background: #c1c1c1; }
.scroll svg { margin-top: 292px; }

.downloads { position: relative; z-index: 3; height: 72px; border-top: 1px solid #999; background: #dedede; display: flex; align-items: center; font: 300 19px/26px "Open Sans", "Noto Sans CJK TC", sans-serif; color: #111; }
.dl { width: 340px; height: 54px; border-right: 1px solid #b0b0b0; display: flex; align-items: center; padding: 0 27px 0 28px; }
.dl:first-child { width: 346px; padding-left: 33px; }
.dl span { margin-left: 23px; flex: 1; padding-top: 6px; letter-spacing: .4px; }
.dl svg:first-child { margin-top: -2px; }
.showall { margin-left: auto; width: 118px; height: 47px; border-radius: 4px; background: #d1d1d1; text-align: center; line-height: 46px; font-size: 17.800px; }
.dlx { margin: -2px 20px 0 21px; }

.taskbar { height: 60px; display: flex; background: linear-gradient(90deg, #263740 0, #26343b 1180px, #25292b 1330px, #2b2a29 1430px, #1f2c33 1560px, #1a2a33 100%); }
.start { width: 72px; padding: 17px 0 0 24px; }
.find { width: 516px; border: 3px solid #c3c3c3; background: #f2f2f2; display: flex; align-items: center; padding: 0 0 2px 15px; gap: 17px; font-size: 24px; color: #222; }
.find span { margin-top: -2px; }
.tv { padding: 18px 0 0 23px; width: 75px; }
.app { width: 75px; display: flex; align-items: center; justify-content: center; }
.app svg { width: 36px; height: 36px; }
.run { background: linear-gradient(#76b9ed, #76b9ed) center bottom / 61px 3px no-repeat; }
.hot { background: linear-gradient(#76b9ed, #76b9ed) center bottom / 73px 3px no-repeat, linear-gradient(#505d64, #505d64) center / 73px 60px no-repeat; }
.xl-app { background: linear-gradient(90deg, #76b9ed 47px, #5f92b9 47px) center bottom / 61px 3px no-repeat; }
.line { background: linear-gradient(#ff7300, #ff7300) center bottom / 73px 3px no-repeat, linear-gradient(#a76530, #a76530) center / 73px 60px no-repeat; }
.ofc { font: 700 15px "Open Sans", sans-serif; fill: #fff; text-anchor: middle; }
.lt { font: 800 9px "Open Sans", sans-serif; fill: #00b900; text-anchor: middle; }
.tray { margin-left: auto; display: flex; align-items: center; gap: 11.500px; color: #fff; }
.clock { width: 90px; text-align: center; font: 300 18.500px/28px "Open Sans", "Noto Sans CJK TC", sans-serif; margin-top: -3px; letter-spacing: -.2px; }
.note { margin-left: 15px; }
.tray i { width: 1px; height: 60px; background: #7b868c; margin: 0 6px 0 20px; }

.memo { position: absolute; z-index: 4; left: 933px; top: 250px; font: 500 27px/41px "Noto Sans CJK TC", sans-serif; color: #ed1c24; transform: scaleX(1.180); transform-origin: 0 0; }
.ink { position: absolute; z-index: 5; left: 590px; top: 335px; }
```
